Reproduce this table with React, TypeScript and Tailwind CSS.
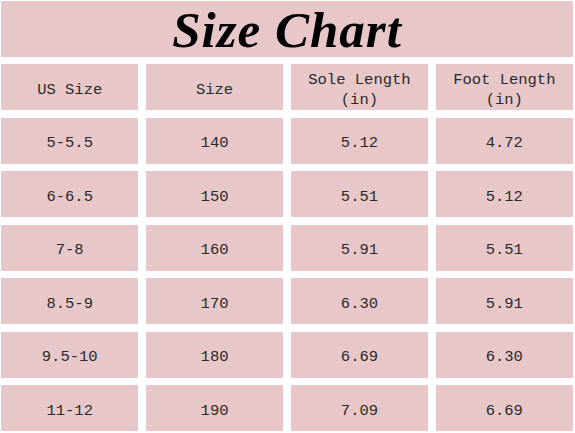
import React from "react";

const rows = [
  ["5-5.5", "140", "5.12", "4.72"],
  ["6-6.5", "150", "5.51", "5.12"],
  ["7-8", "160", "5.91", "5.51"],
  ["8.5-9", "170", "6.30", "5.91"],
  ["9.5-10", "180", "6.69", "6.30"],
  ["11-12", "190", "7.09", "6.69"],
];

const Cell = ({ children }: { children: React.ReactNode }) => (
  <div className="h-[46px] bg-[#e7c7c8] flex items-center justify-center text-center leading-[20px] pt-[5px]">
    {children}
  </div>
);

const App = () => {
  return (
    <div className="w-[575px] h-[433px] bg-white overflow-hidden pt-px pl-px pr-[2px]">
      <div className="h-[56px] bg-[#e7c7c8] flex items-center justify-center">
        <div className="font-['Liberation_Serif',serif] font-bold italic text-[51px] text-black leading-none tracking-[1px] pt-[2px]">
          Size Chart
        </div>
      </div>
      <div className="mt-[7px] grid grid-cols-4 gap-x-[7.5px] gap-y-[7.5px] font-['Liberation_Mono',monospace] text-[15.5px] text-[#2a2a2a]">
        <Cell>US Size</Cell>
        <Cell>Size</Cell>
        <Cell>
          Sole Length
          <br />
          (in)
        </Cell>
        <Cell>
          Foot Length
          <br />
          (in)
        </Cell>
        {rows.map((r) =>
          r.map((v, i) => <Cell key={r[0] + i}>{v}</Cell>)
        )}
      </div>
    </div>
  );
};

export default App;
